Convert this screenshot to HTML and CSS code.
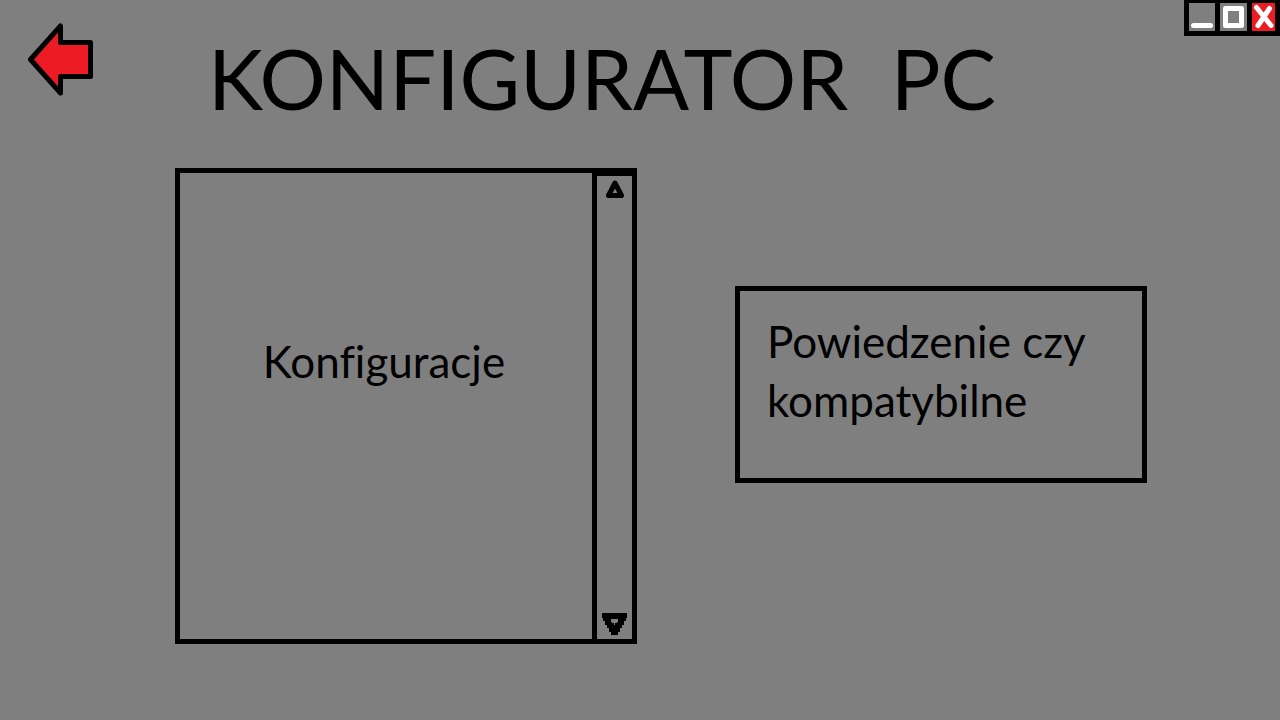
FILE: index.html
```html
<!DOCTYPE html>
<html lang="pl">
<head>
<meta charset="utf-8">
<meta name="viewport" content="width=device-width, initial-scale=1">
<title>Konfigurator PC</title>
<link rel="stylesheet" href="styles.css">
</head>
<body class="page">
<header class="header">
  <button class="back" type="button" aria-label="Wstecz">
    <svg width="66" height="74" viewBox="0 0 66 74" aria-hidden="true">
      <path d="M2.5 36.5 32.500 3v16.500h30v34h-30V70z" fill="#ed1c24" stroke="#000" stroke-width="5" stroke-linejoin="round"/>
    </svg>
  </button>
  <h1 class="title">KONFIGURATOR  PC</h1>
  <div class="window-controls">
    <button class="control" type="button" aria-label="Minimalizuj">
      <svg width="26" height="28" viewBox="0 0 26 28" aria-hidden="true"><path d="M4.500 22.500h17" stroke="#fff" stroke-width="5" stroke-linecap="round"/></svg>
    </button>
    <button class="control" type="button" aria-label="Maksymalizuj">
      <svg width="27" height="28" viewBox="0 0 27 28" aria-hidden="true"><path d="M5.500 5.500h16v17h-16z" fill="none" stroke="#fff" stroke-width="5" stroke-linejoin="round"/></svg>
    </button>
    <button class="control control-close" type="button" aria-label="Zamknij">
      <svg width="23" height="28" viewBox="0 0 23 28" aria-hidden="true"><path d="M4.500 4.500 19 22.500M17.500 5.500 6 22.500" stroke="#fff" stroke-width="5" stroke-linecap="round"/></svg>
    </button>
  </div>
</header>
<main class="content">
  <section class="configurations">
    <h2 class="text configurations-label">Konfiguracje</h2>
    <div class="scrollbar">
      <button class="scroll-button" type="button" aria-label="W górę">
        <svg width="18" height="19" viewBox="0 0 18 19" aria-hidden="true"><path d="M9 3 15.500 15.500h-13z" fill="none" stroke="#000" stroke-width="5" stroke-linejoin="round"/></svg>
      </button>
      <button class="scroll-button" type="button" aria-label="W dół">
        <svg width="25" height="22" viewBox="0 0 25 22" shape-rendering="crispEdges" aria-hidden="true"><path fill-rule="evenodd" d="M0 0h25v5h-1v3h-2v4h-2v3h-2v4h-2v3H9v-3H7v-4H5v-3H3V8H1V5H0zM9 6v3h1v1h2v2h1v-2h2V9h1V6z"/></svg>
      </button>
    </div>
  </section>
  <section class="compatibility">
    <p class="text">Powiedzenie czy kompatybilne</p>
  </section>
</main>
</body>
</html>
```
FILE: styles.css
```css
* {
  box-sizing: border-box;
}

.page {
  margin: 0;
  min-height: 100vh;
  background: #7f7f7f;
  color: #000;
  font-family: Lato, "Open Sans", sans-serif;
  font-variant-ligatures: no-common-ligatures;
}

button {
  display: block;
  margin: 0;
  padding: 0;
  border: 0;
  background: none;
  color: inherit;
  cursor: pointer;
}

svg {
  display: block;
}

.header {
  display: flex;
  align-items: flex-start;
  padding-left: 28px;
}

.back {
  margin-top: 23px;
}

.title {
  flex: 1;
  margin: 28px 0 0 114px;
  font-size: 83px;
  font-weight: 400;
  line-height: 100px;
  white-space: pre;
}

.window-controls {
  display: flex;
  gap: 5px;
  padding: 3px 5px 5px;
  background: #000;
}

.control {
  background: #7f7f7f;
}

.control-close {
  background: #ed1c24;
}

.content {
  display: grid;
  grid-template-columns: 462fr 412fr;
  align-items: center;
  column-gap: 98px;
  padding: 40px 133px 40px 175px;
}

.configurations {
  display: flex;
  min-height: 476px;
  border: 5px solid #000;
}

.configurations-label {
  flex: 1;
  align-self: center;
  padding: 0 4px 90px 0;
  text-align: center;
}

.text {
  margin: 0;
  font-size: 44px;
  font-weight: 400;
  line-height: 59px;
}

.scrollbar {
  display: flex;
  flex-direction: column;
  align-items: center;
  justify-content: space-between;
  width: 40px;
  padding: 4px 0;
  border-top: 3px solid #000;
  border-left: 5px solid #000;
}

.compatibility {
  min-height: 197px;
  margin-bottom: 43px;
  padding: 21px 27px;
  border: 5px solid #000;
}
```
